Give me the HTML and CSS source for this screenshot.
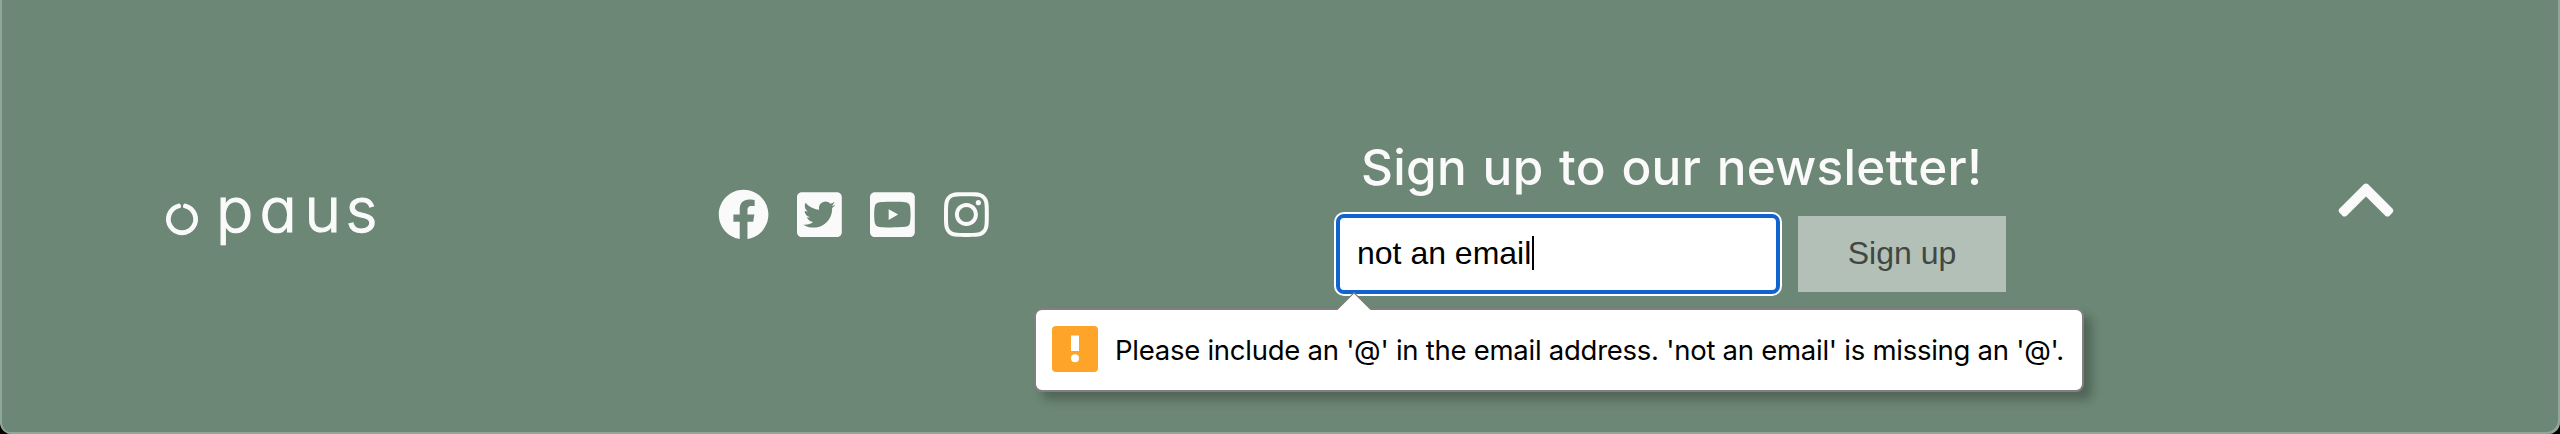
FILE: index.html
```html
<!DOCTYPE html>
<html lang="en">
<head>
<meta charset="utf-8">
<title>Paus</title>
<link rel="stylesheet" href="styles.css">
</head>
<body>
<footer class="footer">
  <a class="logo" aria-label="paus">
    <svg class="logo-mark" viewBox="0 0 32 32"><path d="M12.8 2.8A13.6 13.6 0 1 0 19.6 2.8" transform="translate(-.2 .2)"/></svg>
    <span class="logo-word"><span class="l-p">p</span><span class="l-a">a</span><span class="l-u">u</span><span class="l-s">s</span></span>
  </a>
  <nav class="social">
    <svg class="round" viewBox="0 0 512 512"><path d="M504 256C504 119 393 8 256 8S8 119 8 256c0 123.78 90.69 226.38 209.25 245V327.69h-63V256h63v-54.64c0-62.15 37-96.48 93.67-96.48 27.14 0 55.52 4.84 55.52 4.84v61h-31.28c-30.8 0-40.41 19.12-40.41 38.73V256h68.78l-11 71.69h-57.78V501C413.31 482.38 504 379.78 504 256z"/></svg>
    <svg class="square" viewBox="0 0 448 512"><path d="M400 32H48C21.5 32 0 53.5 0 80v352c0 26.5 21.5 48 48 48h352c26.5 0 48-21.5 48-48V80c0-26.5-21.5-48-48-48zm-48.9 158.8c.2 2.8.2 5.7.2 8.5 0 86.7-66 186.6-186.6 186.6-37.2 0-71.7-10.8-100.7-29.4 5.3.6 10.4.8 15.8.8 30.7 0 58.9-10.4 81.4-28-28.8-.6-53-19.5-61.3-45.5 10.1 1.5 19.2 1.5 29.6-1.2-30-6.1-52.5-32.5-52.5-64.4v-.8c8.7 4.9 18.9 7.9 29.6 8.3a65.447 65.447 0 0 1-29.2-54.6c0-12.2 3.2-23.4 8.9-33.1 32.3 39.8 80.8 65.8 135.2 68.6-9.3-44.5 24-80.6 64-80.6 18.9 0 35.9 7.9 47.9 20.7 14.8-2.8 29-8.3 41.6-15.8-4.9 15.2-15.2 28-28.8 36.1 13.2-1.4 26-5.1 37.8-10.2-8.9 13.1-20.1 24.7-32.9 34z"/></svg>
    <svg class="square" viewBox="0 0 448 512"><path d="M186.8 202.1l95.2 54.1-95.2 54.1V202.1zM448 80v352c0 26.5-21.5 48-48 48H48c-26.5 0-48-21.5-48-48V80c0-26.5 21.5-48 48-48h352c26.5 0 48 21.5 48 48zm-42 176.3s0-59.6-7.6-88.2c-4.2-15.8-16.5-28.2-32.2-32.4C337.9 128 224 128 224 128s-113.9 0-142.2 7.7c-15.7 4.2-28 16.6-32.2 32.4-7.6 28.5-7.6 88.2-7.6 88.2s0 59.6 7.6 88.2c4.2 15.8 16.5 27.7 32.2 31.9C110.1 384 224 384 224 384s113.9 0 142.2-7.7c15.7-4.2 28-16.1 32.2-31.9 7.6-28.5 7.6-88.1 7.6-88.1z"/></svg>
    <svg class="square" viewBox="0 0 448 512"><path d="M224.1 141c-63.6 0-114.9 51.3-114.9 114.9s51.3 114.9 114.9 114.9S339 319.5 339 255.9 287.7 141 224.1 141zm0 189.6c-41.1 0-74.7-33.5-74.7-74.7s33.5-74.7 74.7-74.7 74.7 33.5 74.7 74.7-33.6 74.7-74.7 74.7zm146.4-194.3c0 14.9-12 26.8-26.8 26.8-14.9 0-26.8-12-26.8-26.8s12-26.8 26.8-26.8 26.8 12 26.8 26.8zm76.1 27.2c-1.7-35.9-9.9-67.7-36.2-93.9-26.2-26.2-58-34.4-93.9-36.2-37-2.1-147.9-2.1-184.9 0-35.8 1.7-67.6 9.9-93.9 36.1s-34.4 58-36.2 93.9c-2.1 37-2.1 147.9 0 184.9 1.7 35.9 9.9 67.7 36.2 93.9s58 34.4 93.9 36.2c37 2.1 147.9 2.1 184.9 0 35.9-1.7 67.7-9.9 93.9-36.2 26.2-26.2 34.4-58 36.2-93.9 2.1-37 2.1-147.8 0-184.8zM398.8 388c-7.8 19.6-22.9 34.7-42.6 42.6-29.5 11.7-99.5 9-132.1 9s-102.7 2.6-132.1-9c-19.6-7.8-34.7-22.9-42.6-42.6-11.7-29.5-9-99.5-9-132.1s-2.6-102.7 9-132.1c7.8-19.6 22.9-34.7 42.6-42.6 29.5-11.7 99.5-9 132.1-9s102.7-2.6 132.1 9c19.6 7.8 34.7 22.9 42.6 42.6 11.7 29.5 9 99.5 9 132.1s2.7 102.7-9 132.1z"/></svg>
  </nav>
  <section class="newsletter">
    <h2 class="title">Sign up to our newsletter!</h2>
    <div class="form">
      <div class="field"><span>not an email</span><i class="caret"></i></div>
      <div class="button">Sign up</div>
    </div>
    <div class="bubble">
      <svg class="arrow" viewBox="0 0 36 18"><path class="arrow-fill" d="M1 18L18 1L35 18z"/><path class="arrow-line" d="M1 17.5L18 .8L35 17.5"/></svg>
      <svg class="warn" viewBox="0 0 46 46"><rect width="46" height="46" rx="4" fill="#fda429"/><rect x="19" y="9.500" width="8" height="15.500" fill="#fff"/><circle cx="23" cy="32.200" r="4" fill="#fff"/></svg>
      <span class="message">Please include an '@' in the email address. 'not an email' is missing an '@'.</span>
    </div>
  </section>
  <svg class="to-top" viewBox="0 0 448 512"><path d="M240.971 130.524l194.343 194.343c9.373 9.373 9.373 24.569 0 33.941l-22.667 22.667c-9.357 9.357-24.522 9.375-33.901.04L224 227.495 69.255 381.516c-9.379 9.335-24.544 9.317-33.901-.04l-22.667-22.667c-9.373-9.373-9.373-24.569 0-33.941L207.03 130.525c9.372-9.373 24.568-9.373 33.941-.001z"/></svg>
</footer>
</body>
</html>
```
FILE: styles.css
```css
* { box-sizing: border-box; }
body { margin: 0; background: #000; }
.footer {
  display: grid;
  grid-template-columns: 550px 616px 1002px 56px;
  align-items: start;
  width: 2560px;
  height: 434px;
  padding: 142px 164px 0 166px;
  background: #6c8775;
  border-radius: 0 0 12px 12px;
  box-shadow: inset 2px 0 #8fa698, inset -2px -2px #8fa698;
  overflow: hidden;
}
.logo { display: flex; gap: 18px; height: 110px; }
.logo-mark { width: 32px; height: 32px; margin-top: 61px; overflow: visible; }
.logo-mark path { fill: none; stroke: #fafafa; stroke-width: 4.8; stroke-linecap: round; }
.logo-word {
  display: flex;
  margin-top: 30px;
  font: 300 62px/75px Inter, sans-serif;
  font-feature-settings: "cv11" 1;
  color: #fafafa;
  -webkit-text-stroke: 1.200px #fafafa;
}
.l-p { width: 43.500px; }
.l-a { width: 45px; }
.l-u { width: 41px; }
.social { display: flex; gap: 28.500px; padding: 47px 0 0 1.500px; }
.social svg { height: 51.200px; fill: #fafafa; }
.round { width: 51.200px; }
.square { width: 44.800px; }
.newsletter { position: relative; padding-left: 4px; }
.title {
  margin: 0 0 11px 25px;
  height: 61px;
  font: 500 49.500px/50px Inter, sans-serif;
  letter-spacing: .3px;
  word-spacing: 2px;
  color: #fafafa;
  white-space: nowrap;
}
.form { display: flex; gap: 18px; align-items: center; font: 32px/36px "Liberation Sans", Arial, sans-serif; }
.field {
  display: flex;
  align-items: center;
  width: 444px;
  height: 80px;
  padding: 0 0 2px 17px;
  color: #000;
  background: #fff;
  border: 4px solid #1064cf;
  border-radius: 8px;
  box-shadow: 0 0 0 2px #fff;
}
.caret { width: 2px; height: 34px; margin-left: 1px; background: #000; }
.button { width: 208px; height: 76px; line-height: 74px; text-align: center; background: #b3c0b7; color: #414741; }
.bubble {
  position: absolute;
  left: -298px;
  top: 166px;
  display: flex;
  align-items: center;
  width: 1050px;
  height: 84px;
  padding: 0 0 2px 16px;
  background: #fff;
  border: 2px solid #808080;
  border-radius: 8px;
  box-shadow: 8px 8px 10px rgba(0, 0, 0, .25);
}
.arrow { position: absolute; left: 300px; top: -18px; width: 36px; height: 18px; }
.arrow-fill { fill: #fff; }
.arrow-line { fill: none; stroke: #808080; stroke-width: 1.200; }
.warn { flex: none; width: 46px; height: 46px; margin-right: 17px; }
.message { padding-top: 2px; font: 400 27.500px/36px Inter, sans-serif; letter-spacing: -.26px; color: #000; white-space: nowrap; }
.to-top { width: 56px; height: 64px; margin: 26px 0 0 4px; fill: #fafafa; }
```
